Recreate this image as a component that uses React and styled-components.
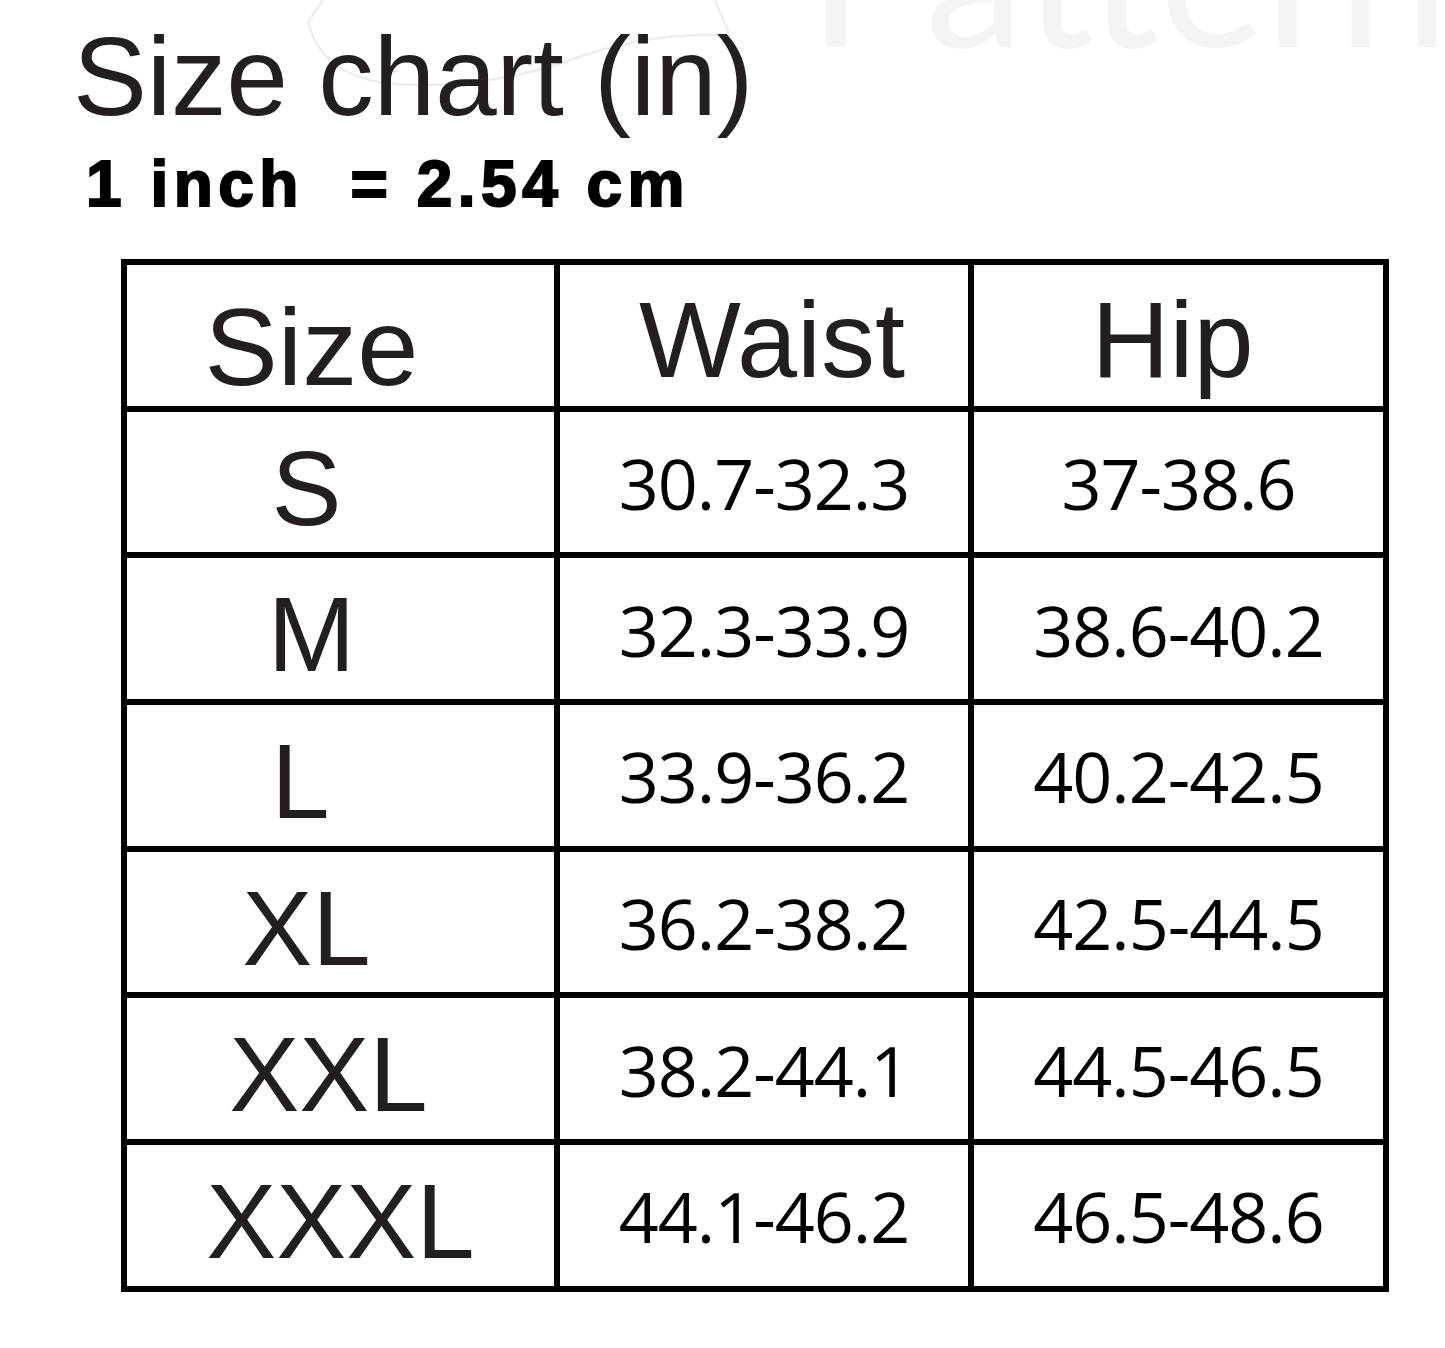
import React from "react";
import styled, { createGlobalStyle } from "styled-components";

const GlobalStyle = createGlobalStyle`
  html, body {
    margin: 0;
    padding: 0;
    background: #fff;
  }
  body {
    font-family: "Liberation Sans", Arial, sans-serif;
    color: #231f20;
  }
`;

// offset = how far the label sits off the cell centre, in px (negative = left)
const rows = [
  { size: "S", waist: "30.7-32.3", hip: "37-38.6", offset: -34 },
  { size: "M", waist: "32.3-33.9", hip: "38.6-40.2", offset: -29 },
  { size: "L", waist: "33.9-36.2", hip: "40.2-42.5", offset: -40 },
  { size: "XL", waist: "36.2-38.2", hip: "42.5-44.5", offset: -34 },
  { size: "XXL", waist: "38.2-44.1", hip: "44.5-46.5", offset: -12 },
  { size: "XXXL", waist: "44.1-46.2", hip: "46.5-48.6", offset: 0 },
];

const nudge = (p) => {
  const o = p.$offset || 0;
  return o < 0 ? `padding-right: ${-2 * o}px;` : `padding-left: ${2 * o}px;`;
};

const Page = styled.main`
  position: relative;
  width: 1445px;
  height: 1348px;
  box-sizing: border-box;
  padding: 22px 0 0 73px;
  overflow: hidden;
`;

const Watermark = styled.div`
  position: absolute;
  top: -130px;
  left: 808px;
  font-family: Lato, "Liberation Sans", sans-serif;
  font-weight: 400;
  font-size: 200px;
  line-height: 1;
  color: #f4f4f4;
  white-space: nowrap;
  pointer-events: none;
`;

const Mark = styled.svg`
  position: absolute;
  top: 0;
  left: 290px;
  pointer-events: none;
`;

const Content = styled.div`
  position: relative;
`;

const Title = styled.h1`
  margin: 0;
  font-weight: 400;
  font-size: 111px;
  line-height: 1;
  letter-spacing: -0.3px;
  color: #231f20;
`;

const Subtitle = styled.p`
  margin: 19px 0 0 13px;
  font-weight: 700;
  font-size: 64px;
  line-height: 1;
  letter-spacing: 5.5px;
  color: #000;
  white-space: pre;
  -webkit-text-stroke: 2px #000;
`;

const Table = styled.div`
  margin: 43px 0 0 48px;
  display: grid;
  grid-template-columns: 427px 408px 409px;
  grid-auto-rows: 140.7px;
  gap: 6px;
  padding: 6px;
  background: #000;
  width: max-content;
`;

const Cell = styled.div`
  background: #fff;
  display: flex;
  align-items: center;
  justify-content: center;
  box-sizing: border-box;
`;

const HeadCell = styled(Cell)`
  font-size: ${(p) => p.$size || 108}px;
  line-height: 1;
  padding-top: ${(p) => p.$drop || 10}px;
  ${nudge}
  color: #231f20;
`;

const SizeCell = styled(Cell)`
  font-size: 105px;
  line-height: 1;
  padding-top: 12px;
  ${nudge}
  color: #231f20;
`;

const NumCell = styled(Cell)`
  font-family: "Open Sans", "Noto Sans", sans-serif;
  font-stretch: 95%;
  font-weight: 500;
  font-size: 70px;
  line-height: 1;
  letter-spacing: -1px;
  padding-top: 2px;
  color: #000;
`;

const App = () => {
  return (
    <>
      <GlobalStyle />
      <Page>
        <Mark width="460" height="100" viewBox="0 0 460 100">
          <path
            d="M36 -4 L18 22 Q32 78 105 84 Q190 90 275 62 Q360 30 440 36 L423 -4"
            fill="none"
            stroke="#ededed"
            strokeWidth="2.5"
          />
        </Mark>
        <Watermark>Pattern</Watermark>
        <Content>
          <Title>Size chart (in)</Title>
          <Subtitle>{"1 inch  = 2.54 cm"}</Subtitle>
          <Table>
            <HeadCell $size={110} $drop={24} $offset={-29}>
              Size
            </HeadCell>
            <HeadCell $offset={8}>Waist</HeadCell>
            <HeadCell $offset={-6}>Hip</HeadCell>
            {rows.map((row) => (
              <React.Fragment key={row.size}>
                <SizeCell $offset={row.offset}>{row.size}</SizeCell>
                <NumCell>{row.waist}</NumCell>
                <NumCell>{row.hip}</NumCell>
              </React.Fragment>
            ))}
          </Table>
        </Content>
      </Page>
    </>
  );
};

export default App;
